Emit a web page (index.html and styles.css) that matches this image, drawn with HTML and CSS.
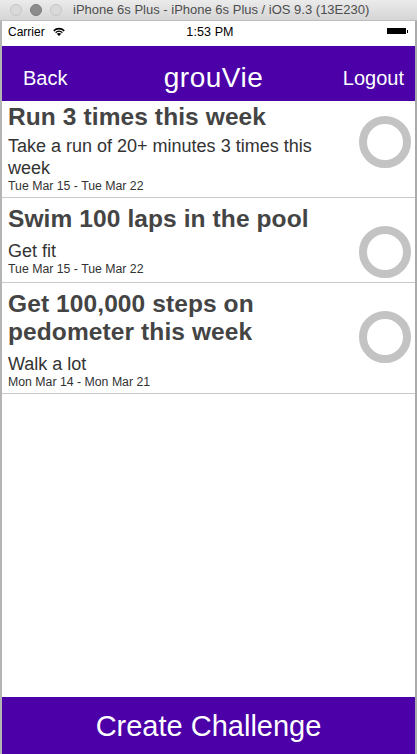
FILE: index.html
```html
<!DOCTYPE html>
<html>
<head>
<meta charset="utf-8">
<link rel="stylesheet" href="styles.css">
</head>
<body>
<div class="window">
  <div class="titlebar">
    <div class="lights">
      <span class="light"></span>
      <span class="light light--dark"></span>
      <span class="light"></span>
    </div>
    <div class="wintitle">iPhone 6s Plus - iPhone 6s Plus / iOS 9.3 (13E230)</div>
  </div>
  <div class="screen">
    <div class="status">
      <div class="status-left">
        <span>Carrier</span>
        <svg class="wifi" width="12" height="9" viewBox="0 0 12 9">
          <path d="M6 9 L0.2 3.2 A8.2 8.2 0 0 1 11.8 3.2 Z" fill="#000"/>
          <path d="M1.76 4.76 A6 6 0 0 1 10.24 4.76" stroke="#fff" stroke-width="1.1" fill="none"/>
          <path d="M3.3 6.7 A3.4 3.4 0 0 1 8.7 6.7" stroke="#fff" stroke-width="1.1" fill="none"/>
        </svg>
      </div>
      <div class="status-time">1:53 PM</div>
      <div class="status-right"><span class="battery"></span></div>
    </div>
    <div class="nav">
      <span class="nav-btn">Back</span>
      <span class="nav-title">grouVie</span>
      <span class="nav-btn nav-btn--right">Logout</span>
    </div>
    <div class="list">
      <div class="row row--first">
        <div class="row-text">
          <div class="row-title">Run 3 times this week</div>
          <div class="row-desc">Take a run of 20+ minutes 3 times this week</div>
          <div class="row-date">Tue Mar 15 - Tue Mar 22</div>
        </div>
        <div class="ring"></div>
      </div>
      <div class="row">
        <div class="row-text">
          <div class="row-title">Swim 100 laps in the pool</div>
          <div class="row-desc">Get fit</div>
          <div class="row-date">Tue Mar 15 - Tue Mar 22</div>
        </div>
        <div class="ring"></div>
      </div>
      <div class="row">
        <div class="row-text">
          <div class="row-title">Get 100,000 steps on pedometer this week</div>
          <div class="row-desc">Walk a lot</div>
          <div class="row-date">Mon Mar 14 - Mon Mar 21</div>
        </div>
        <div class="ring"></div>
      </div>
    </div>
    <div class="bottom">Create Challenge</div>
  </div>
</div>
</body>
</html>
```
FILE: styles.css
```css
* { box-sizing: border-box; }
html, body { margin: 0; padding: 0; }
body {
  font-family: "Liberation Sans", Arial, sans-serif;
  width: 417px;
  height: 754px;
  overflow: hidden;
  background: #fff;
}
.window {
  display: flex;
  flex-direction: column;
  height: 754px;
}
.titlebar {
  height: 21px;
  flex: none;
  display: flex;
  align-items: center;
  background: linear-gradient(#ebebeb, #d5d5d5);
  border-bottom: 1px solid #bdbdbd;
}
.lights {
  display: flex;
  gap: 8px;
  padding-left: 10px;
}
.light {
  width: 12px;
  height: 12px;
  border-radius: 50%;
  background: #d9d9d9;
  border: 1px solid #c4c4c4;
}
.light--dark {
  background: #8c8c8c;
  border-color: #7c7c7c;
}
.wintitle {
  margin-left: 11px;
  font-size: 13px;
  line-height: 20px;
  color: #4d4d4d;
  white-space: nowrap;
}
.screen {
  flex: 1;
  display: flex;
  flex-direction: column;
  border-left: 2px solid #b4b4b4;
  border-right: 2px solid #ababab;
  min-height: 0;
}
.status {
  height: 25px;
  flex: none;
  display: grid;
  grid-template-columns: 1fr auto 1fr;
  align-items: start;
  background: #fff;
  font-size: 12px;
  line-height: 22px;
  color: #000;
  padding: 0 6px;
}
.status-left {
  display: flex;
  align-items: center;
  gap: 8px;
}
.wifi { margin-top: -1px; }
.status-time {
  font-size: 12.5px;
  letter-spacing: 0.1px;
  padding-left: 3px;
}
.status-right {
  display: flex;
  justify-content: flex-end;
  padding-top: 7px;
  padding-right: 1px;
}
.battery {
  position: relative;
  width: 19px;
  height: 6px;
  background: #000;
  margin-right: 2px;
}
.battery::after {
  content: "";
  position: absolute;
  right: -2px;
  top: 1.5px;
  width: 1.5px;
  height: 3px;
  background: #000;
}
.nav {
  height: 55px;
  flex: none;
  background: #4b00a8;
  color: #fff;
  display: grid;
  grid-template-columns: 1fr auto 1fr;
  align-items: start;
  padding: 0 11px 0 21px;
}
.nav-btn {
  font-size: 20px;
  line-height: 24px;
  margin-top: 20px;
}
.nav-btn--right {
  justify-self: end;
}
.nav-title {
  font-size: 28px;
  line-height: 32px;
  letter-spacing: 0.5px;
  margin-top: 16px;
}
.list {
  flex: 1;
  background: #fff;
  min-height: 0;
}
.row {
  display: flex;
  align-items: flex-start;
  gap: 8px;
  padding: 7px 4px 4px 6px;
  border-bottom: 1px solid #c9c9c9;
}
.row--first {
  padding-top: 2px;
}
.row-text {
  flex: 1;
  min-width: 0;
}
.row-title {
  font-size: 24.5px;
  line-height: 28px;
  font-weight: bold;
  letter-spacing: 0.1px;
  color: #444;
}
.row-desc {
  margin-top: 7px;
  font-size: 18px;
  line-height: 22px;
  color: #333;
}
.row--first .row-desc {
  margin-top: 4px;
}
.row-date {
  font-size: 12.3px;
  line-height: 14px;
  color: #333;
}
.ring {
  flex: none;
  width: 52px;
  height: 52px;
  border-radius: 50%;
  border: 8px solid #c3c3c3;
  margin-top: 21px;
}
.row--first .ring {
  margin-top: 13px;
}
.bottom {
  height: 57px;
  flex: none;
  background: #4b00a8;
  color: #fff;
  font-size: 29px;
  line-height: 57px;
  padding-top: 1px;
  text-align: center;
}
```
